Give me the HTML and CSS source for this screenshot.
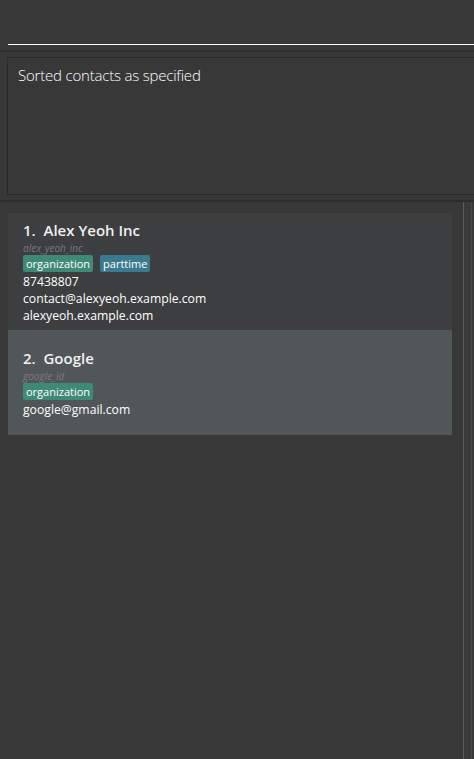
FILE: index.html
```html
<!DOCTYPE html>
<html>
<head>
<meta charset="utf-8">
<link rel="stylesheet" href="styles.css">
</head>
<body>
<div class="app">
  <div class="command">
    <div class="command-field"></div>
  </div>
  <div class="sep"></div>
  <div class="result-wrap">
    <div class="result">Sorted contacts as specified</div>
  </div>
  <div class="sep"></div>
  <div class="list-area">
    <div class="list">
      <div class="card card-even card-tall">
        <div class="name">1.  Alex Yeoh Inc</div>
        <div class="cid">alex_yeoh_inc</div>
        <div class="tags">
          <span class="tag tag-org">organization</span>
          <span class="tag tag-part">parttime</span>
        </div>
        <div class="line">87438807</div>
        <div class="line">contact@alexyeoh.example.com</div>
        <div class="line">alexyeoh.example.com</div>
      </div>
      <div class="card card-odd">
        <div class="name">2.  Google</div>
        <div class="cid">google_id</div>
        <div class="tags">
          <span class="tag tag-org">organization</span>
        </div>
        <div class="line">google@gmail.com</div>
      </div>
    </div>
    <div class="rail"></div>
    <div class="rail-gap"></div>
    <div class="rail rail-dim"></div>
  </div>
</div>
</body>
</html>
```
FILE: styles.css
```css
html, body {
  margin: 0;
  padding: 0;
  background: #383838;
  height: 100%;
  overflow: hidden;
}
.app {
  display: flex;
  flex-direction: column;
  height: 759px;
  font-family: "Open Sans", "Noto Sans", sans-serif;
  color: #ffffff;
}
.command {
  height: 50px;
  padding-left: 8px;
  box-sizing: border-box;
}
.command-field {
  height: 44px;
  border-bottom: 1px solid #ffffff;
}
.sep {
  height: 2px;
  background: #2e2e2e;
  flex-shrink: 0;
}
.result-wrap {
  padding: 5px 0 5px 7px;
}
.result {
  height: 129px;
  border: 1px solid #2a2a2a;
  border-right: none;
  padding: 7px 0 0 10px;
  box-sizing: content-box;
  font-family: "Open Sans", sans-serif;
  font-weight: 300;
  font-size: 15px;
  letter-spacing: -0.2px;
  color: #ffffff;
}
.list-area {
  flex: 1;
  display: flex;
}
.list {
  width: 444px;
  padding: 11px 0 0 8px;
  margin-right: 11px;
  display: flex;
  flex-direction: column;
}
.rail {
  width: 1px;
  background: #5c5c5c;
}
.rail-gap {
  width: 7px;
  background: #3a3a3a;
}
.rail-dim {
  background: #4a4a4a;
}
.card {
  display: flex;
  flex-direction: column;
  justify-content: center;
  padding: 0 15px;
  height: 105px;
  box-sizing: border-box;
}
.card-tall {
  height: 117px;
}
.card-even {
  background: #3c3e40;
}
.card-odd {
  background: #515658;
}
.name {
  font-family: "Open Sans", sans-serif;
  font-weight: 600;
  font-size: 15px;
  line-height: 20px;
  white-space: pre;
  color: #f0f0f0;
}
.cid {
  font-size: 10px;
  font-style: italic;
  color: #7a7a7a;
  line-height: 12px;
  margin-top: 2px;
}
.tags {
  display: flex;
  gap: 7px;
  margin: 1px 0 1px;
}
.tag {
  font-size: 11px;
  line-height: 17px;
  padding: 0 3px;
  border-radius: 2px;
  color: #ffffff;
}
.tag-org {
  background: #3e8a76;
}
.tag-part {
  background: #3b7a8e;
}
.line {
  font-size: 12.2px;
  line-height: 17px;
  color: #ffffff;
}
```
